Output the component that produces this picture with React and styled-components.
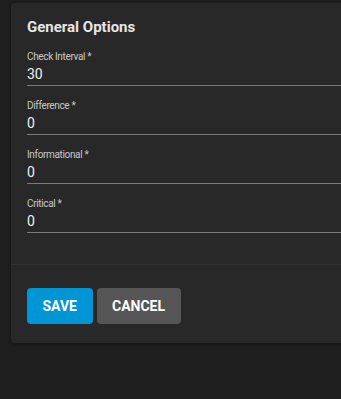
import React from 'react';
import styled, { createGlobalStyle } from 'styled-components';

const GlobalStyle = createGlobalStyle`
	body {
		margin: 0;
		background: #1e1e1e;
		font-family: Roboto, 'Liberation Sans', sans-serif;
		overflow: hidden;
	}
`;

const Page = styled.div`
	width: 341px;
	height: 399px;
	padding: 3px 0 0 11px;
	box-sizing: border-box;
	overflow: hidden;
`;

const Card = styled.div`
	width: 360px;
	background: #282828;
	border-radius: 4px;
	box-shadow: 0 1px 3px rgba(0, 0, 0, 0.4);
`;

const Body = styled.div`
	padding: 14px 0 31px 16px;
`;

const Title = styled.h3`
	margin: 0;
	font-size: 15px;
	line-height: 20px;
	font-weight: 700;
	color: #e6e6e6;
`;

const Field = styled.div`
	display: flex;
	flex-direction: column;
	padding: 13px 0 1px;
	border-bottom: 1px solid #7a7a7a;
`;

const Label = styled.label`
	font-size: 10px;
	letter-spacing: -0.35px;
	line-height: 14px;
	color: #c8c8c8;
`;

const Value = styled.div`
	font-size: 14px;
	line-height: 20px;
	color: #f0f0f0;
`;

const Footer = styled.div`
	display: flex;
	gap: 4px;
	padding: 23px 16px 19px;
	border-top: 1px solid #333;
`;

const Button = styled.button`
	height: 36px;
	padding: 0 15.5px;
	border: none;
	border-radius: 4px;
	font-family: inherit;
	font-size: 14px;
	font-weight: 700;
	color: #fff;
	background: ${(p) => (p.$primary ? '#0095d5' : '#555555')};
`;

const fields = [
	{ label: 'Check Interval *', value: '30' },
	{ label: 'Difference *', value: '0' },
	{ label: 'Informational *', value: '0' },
	{ label: 'Critical *', value: '0' },
];

export default () => (
	<Page>
		<GlobalStyle />
		<Card>
			<Body>
				<Title>General Options</Title>
				{fields.map((f) => (
					<Field key={f.label}>
						<Label>{f.label}</Label>
						<Value>{f.value}</Value>
					</Field>
				))}
			</Body>
			<Footer>
				<Button $primary>SAVE</Button>
				<Button>CANCEL</Button>
			</Footer>
		</Card>
	</Page>
);
